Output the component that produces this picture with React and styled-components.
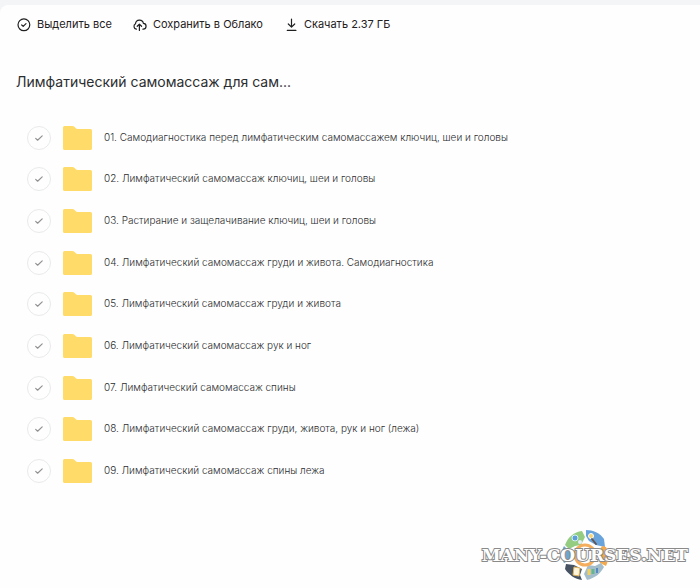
import React from "react";
import styled, { createGlobalStyle } from "styled-components";

const GlobalStyle = createGlobalStyle`
  * {
    box-sizing: border-box;
  }

  body {
    margin: 0;
    background: #f4f5f7;
    font-family: Inter, "Liberation Sans", sans-serif;
  }
`;

const Page = styled.main`
  position: relative;
  min-height: calc(100vh - 5px);
  margin-top: 5px;
  background: #fefefe;
  border-top-left-radius: 8px;
`;

const Toolbar = styled.div`
  display: flex;
  flex-wrap: wrap;
  gap: 20px;
  padding: 8px 16px;
`;

const ToolButton = styled.button`
  display: flex;
  align-items: center;
  gap: 6px;
  height: 22px;
  padding: 0;
  border: none;
  background: none;
  color: #1f2021;
  font-family: inherit;
  font-size: 11px;
  font-weight: 400;
  cursor: pointer;
`;

const Title = styled.h1`
  margin: 0;
  padding: 27px 16px 0;
  color: #2c2d2e;
  font-size: 14px;
  font-weight: 400;
  line-height: 24px;
`;

const FileList = styled.ul`
  display: grid;
  grid-auto-rows: 1fr;
  min-height: 375px;
  margin: 23px 0 0;
  padding: 0 27px;
  list-style: none;
`;

const FileRow = styled.li`
  display: flex;
  align-items: center;
  gap: 12px;
`;

const CheckCircle = styled.span`
  position: relative;
  display: flex;
  flex-shrink: 0;
  align-items: center;
  justify-content: center;
  width: 24px;
  height: 24px;
  border: 1px solid #e9eaeb;
  border-radius: 50%;
  color: #919293;
`;

const Checkbox = styled.input`
  position: absolute;
  inset: 0;
  width: 100%;
  height: 100%;
  margin: 0;
  opacity: 0;
  cursor: pointer;
`;

const FileName = styled.label`
  padding-bottom: 2px;
  color: #2c2d2e;
  font-size: 10px;
  font-weight: 300;
  line-height: 16px;
`;

const Watermark = styled.div`
  position: absolute;
  right: 12px;
  bottom: 7px;
  display: grid;
  place-items: center;
`;

const WatermarkText = styled.span`
  grid-area: 1 / 1;
  z-index: 1;
  color: #fff;
  font-family: "DejaVu Serif", serif;
  font-size: 17px;
  font-weight: 700;
  line-height: 20px;
  -webkit-text-stroke: 2px #8a8a8a;
  paint-order: stroke fill;
`;

const WatermarkLogo = styled.svg`
  grid-area: 1 / 1;
`;

const files = [
  "01. Самодиагностика перед лимфатическим самомассажем ключиц, шеи и головы",
  "02. Лимфатический самомассаж ключиц, шеи и головы",
  "03. Растирание и защелачивание ключиц, шеи и головы",
  "04. Лимфатический самомассаж груди и живота. Самодиагностика",
  "05. Лимфатический самомассаж груди и живота",
  "06. Лимфатический самомассаж рук и ног",
  "07. Лимфатический самомассаж спины",
  "08. Лимфатический самомассаж груди, живота, рук и ног (лежа)",
  "09. Лимфатический самомассаж спины лежа",
];

const lineProps = {
  fill: "none",
  stroke: "currentColor",
  strokeWidth: 1.2,
  strokeLinecap: "round",
  strokeLinejoin: "round",
  "aria-hidden": true,
};

const SelectIcon = () => (
  <svg width="15" height="15" viewBox="0 0 15 15" {...lineProps}>
    <circle cx="7.9" cy="7.8" r="5.9" />
    <path d="M5.7 8l1.5 1.4 2.8-2.8" />
  </svg>
);

const CloudIcon = () => (
  <svg width="15" height="15" viewBox="0 0 15 15" {...lineProps}>
    <path d="M4.4 12.2a2.9 2.9 0 0 1-.9-5.4 4 4 0 0 1 7.9-.4 2.9 2.9 0 0 1-.5 5.8" />
    <path d="M7.4 13.5V7.3M5.2 9.3l2.2-2.1 2.2 2.1" />
  </svg>
);

const DownloadIcon = () => (
  <svg width="15" height="15" viewBox="0 0 15 15" {...lineProps}>
    <path d="M8.500 2v8M5.300 7l3.200 3.100L11.700 7M4.300 13.400h8.600" />
  </svg>
);

const CheckIcon = () => (
  <svg width="10" height="8" viewBox="0 0 10 8" {...lineProps}>
    <path d="M1.7 4.4l1.9 1.8 4.6-4.3" />
  </svg>
);

const FolderIcon = () => (
  <svg width="29" height="24" viewBox="0 0 29 24" aria-hidden="true">
    <path
      fill="#ffdc69"
      d="M1.5 0h7.7c1 0 1.7.3 2.4 1l1.2 1.2c.5.6 1 .8 1.8.8h12.9A1.5 1.5 0 0 1 29 4.5v18a1.5 1.5 0 0 1-1.5 1.5h-26A1.5 1.5 0 0 1 0 22.5v-21A1.5 1.5 0 0 1 1.5 0z"
    />
  </svg>
);

const Logo = () => (
  <WatermarkLogo width="48" height="52" viewBox="0 0 48 52" aria-hidden="true">
    <path fill="#94cc82" d="M4 16C7 8 13 3 21 2l3 6-4 8-6 1-6 3z" />
    <path fill="#69a3dc" d="M25 1c7 0 14 3 18 9l1 8-9-2-7-4-3-5z" />
    <path fill="#f3a94e" d="M41 17l4 1c3 6 3 12 0 19l-6-3-3-8z" />
    <path fill="#a3bdcb" d="M43 38c-4 7-9 11-17 13l-3-6 4-9 7 1 6-3z" />
    <path fill="#475363" d="M21 51C14 50 8 46 4 40l1-5 8 1 8 4-2 6z" />
    <path fill="#6ea5cf" d="M3 34C0 29 0 22 3 17l4 4 4 3-2 7z" />
    <circle cx="24" cy="26" r="10" fill="#fff" stroke="#f4ad5c" strokeWidth="3" />
    <circle cx="14" cy="9" r="3" fill="#5c9fdb" stroke="#d9f0f3" />
    <circle cx="19" cy="13" r="2" fill="#e6eef9" />
    <circle cx="30" cy="7" r="2.5" fill="#f7d375" stroke="#fff" />
    <path d="M31 10l4 5" stroke="#66554e" strokeWidth="2" strokeLinecap="round" />
    <path d="M13 38l6 1-1 8-6-1z" fill="#fff5dc" stroke="#dfb35a" />
    <path d="M28 40v6" stroke="#f3d05c" strokeWidth="3" />
    <path d="M32 40v5" stroke="#65b693" strokeWidth="3" />
    <path d="M36 39v5" stroke="#5689c1" strokeWidth="2" />
  </WatermarkLogo>
);

const App = () => {
  return (
    <>
      <GlobalStyle />
      <Page>
        <Toolbar>
          <ToolButton type="button">
            <SelectIcon />
            Выделить все
          </ToolButton>
          <ToolButton type="button">
            <CloudIcon />
            Сохранить в Облако
          </ToolButton>
          <ToolButton type="button">
            <DownloadIcon />
            Скачать 2.37 ГБ
          </ToolButton>
        </Toolbar>
        <Title>Лимфатический самомассаж для сам...</Title>
        <FileList>
          {files.map((name, index) => (
            <FileRow key={name}>
              <CheckCircle>
                <CheckIcon />
                <Checkbox type="checkbox" id={`file-${index}`} />
              </CheckCircle>
              <FolderIcon />
              <FileName htmlFor={`file-${index}`}>{name}</FileName>
            </FileRow>
          ))}
        </FileList>
        <Watermark>
          <Logo />
          <WatermarkText>MANY-COURSES.NET</WatermarkText>
        </Watermark>
      </Page>
    </>
  );
};

export default App;
